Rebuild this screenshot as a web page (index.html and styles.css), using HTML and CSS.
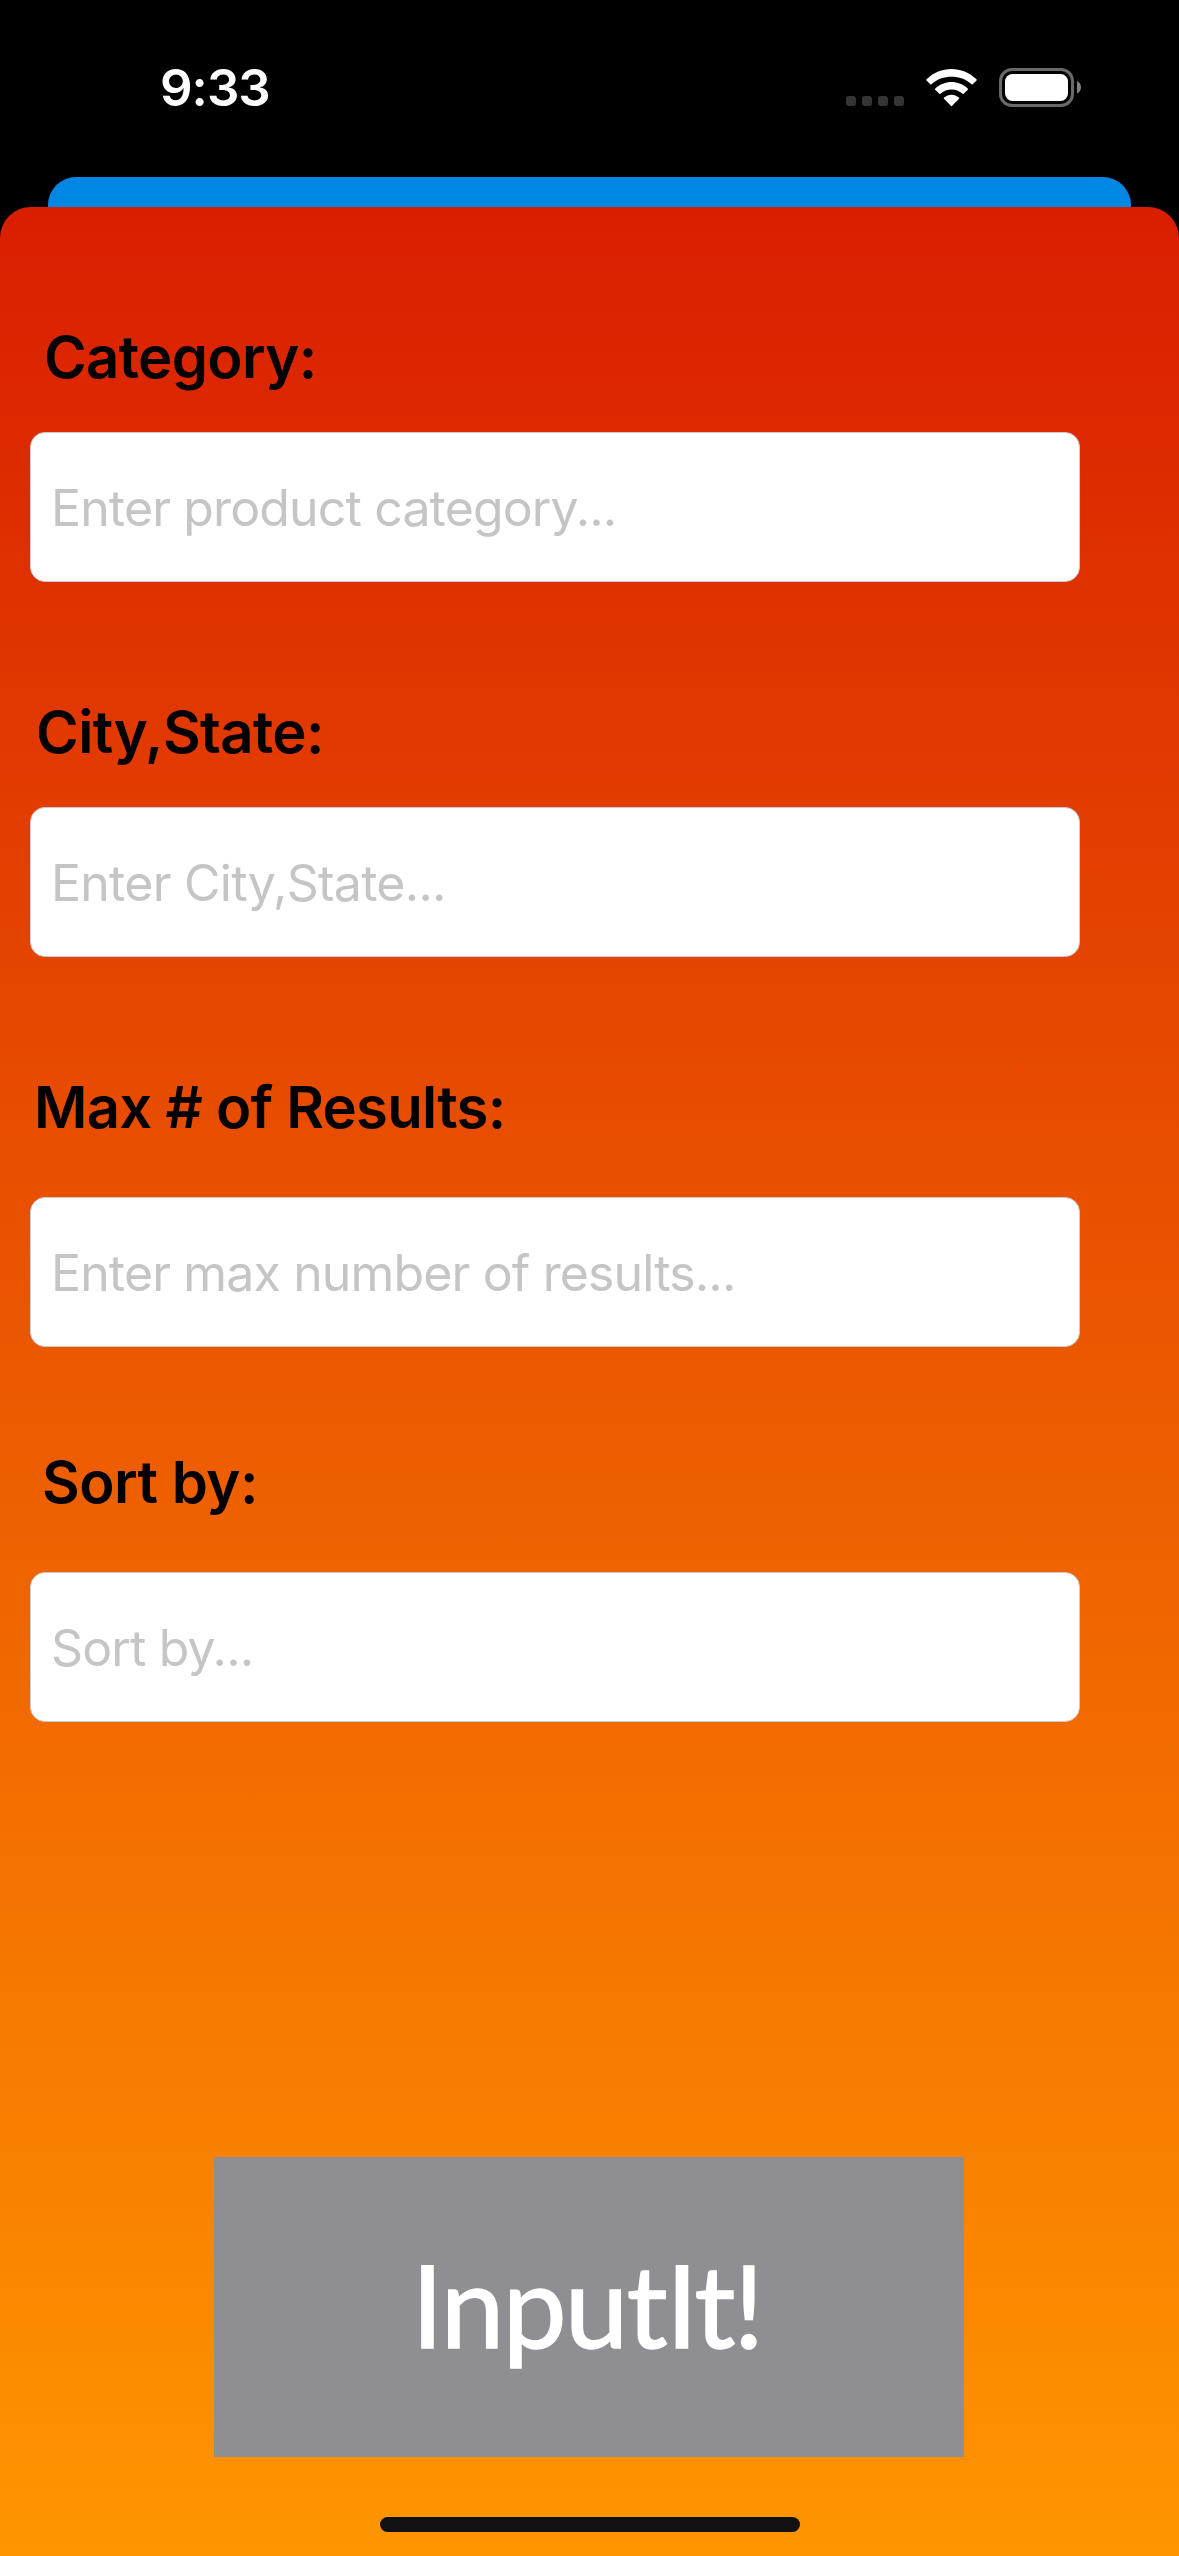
FILE: index.html
```html
<!DOCTYPE html>
<html lang="en">
<head>
<meta charset="utf-8">
<title>InputIt!</title>
<link rel="stylesheet" href="styles.css">
</head>
<body>
<div class="screen">
  <header class="status">
    <span class="time">9:33</span>
    <div class="indicators">
      <svg class="cellular" width="58" height="10" viewBox="0 0 58 10" fill="#343434">
        <rect width="10" height="10" rx="3"/><rect x="16" width="10" height="10" rx="3"/><rect x="32" width="10" height="10" rx="3"/><rect x="48" width="10" height="10" rx="3"/>
      </svg>
      <svg class="wifi" width="51" height="38" viewBox="0 0 51 38" fill="#fff">
        <path d="M.5 11.6Q-.1 11 .6 10.3C7.600 3.500 16.500 0 25.500 0S43.400 3.500 50.400 10.300Q51.100 11 50.500 11.600L46.700 15.300Q46.200 15.800 45.600 15.200C40 10 32.900 7.700 25.500 7.700S11 10 5.400 15.200Q4.800 15.800 4.300 15.300Z"/>
        <path d="M9.200 20.700Q8.600 20.100 9.300 19.400C13.800 15.200 19.600 12.900 25.500 12.900S37.200 15.200 41.700 19.400Q42.400 20.100 41.800 20.700L37.700 24.800Q37.200 25.300 36.600 24.800C33.500 22 29.600 20.500 25.500 20.500S17.500 22 14.400 24.800Q13.800 25.300 13.300 24.800Z"/>
        <path d="M18 29.800Q17.500 29.200 18.100 28.600C20.200 26.800 22.800 25.700 25.500 25.700S30.800 26.800 32.900 28.600Q33.500 29.200 33 29.800L26.200 36.800Q25.500 37.500 24.800 36.800Z"/>
      </svg>
      <svg class="battery" width="82" height="39" viewBox="0 0 82 39">
        <rect x="1.500" y="1.500" width="72" height="36" rx="11.500" fill="none" stroke="#696969" stroke-width="3"/>
        <rect x="6" y="6" width="63" height="27" rx="7.500" fill="#fff"/>
        <path d="M78 13C80.500 14 82 16.500 82 19.300S80.500 24.600 78 25.600Z" fill="#808080"/>
      </svg>
    </div>
  </header>
  <div class="behind"></div>
  <main class="sheet">
    <form class="fields">
      <div class="field near">
        <div class="label category">Category:</div>
        <div class="box"><span class="hint">Enter product category...</span></div>
      </div>
      <div class="field near">
        <div class="label city">City,State:</div>
        <div class="box"><span class="hint place">Enter City,State...</span></div>
      </div>
      <div class="field">
        <div class="label max">Max # of Results:</div>
        <div class="box"><span class="hint">Enter max number of results...</span></div>
      </div>
      <div class="field">
        <div class="label sort">Sort by:</div>
        <div class="box"><span class="hint">Sort by...</span></div>
      </div>
    </form>
    <button class="submit" type="button">InputIt!</button>
    <div class="home"></div>
  </main>
</div>
</body>
</html>
```
FILE: styles.css
```css
* { box-sizing: border-box; }
body { margin: 0; background: #000; font-family: Inter, "Liberation Sans", sans-serif; }
.screen { width: 1179px; height: 2556px; display: flex; flex-direction: column; overflow: hidden; background: #000; }
.status { height: 177px; padding: 58px 98px 0 160px; display: flex; justify-content: space-between; align-items: flex-start; }
.time { font-size: 51px; line-height: 60px; font-weight: 600; letter-spacing: -1px; color: #fff; white-space: nowrap; }
.indicators { display: flex; align-items: flex-start; padding-top: 10px; }
.cellular { margin-top: 28px; margin-right: 22px; }
.wifi { margin-top: 1px; margin-right: 22px; }
.behind { height: 30px; margin: 0 48px; background: #0086e3; border-radius: 28px 28px 0 0; }
.sheet { flex: 1; display: flex; flex-direction: column; align-items: center; padding-top: 114px; border-radius: 31px 31px 0 0; background: linear-gradient(#d91e00, #ff9500); }
.fields { width: 100%; display: grid; grid-auto-rows: 375px; }
.field { padding-left: 30px; display: flex; flex-direction: column; gap: 54px; }
.near { gap: 39px; }
.label { height: 72px; font-size: 58px; line-height: 72px; font-weight: 600; color: #000; white-space: nowrap; }
.category { padding-left: 14px; letter-spacing: -0.65px; }
.city { padding-left: 6px; letter-spacing: -0.6px; }
.max { padding-left: 4px; letter-spacing: -0.74px; }
.sort { padding-left: 12px; letter-spacing: -0.5px; }
.box { width: 1050px; height: 150px; padding: 2px 0 0 20px; display: flex; align-items: center; border: 1px solid #c9cacc; border-radius: 15px; background: #fff; }
.hint { font-size: 50px; line-height: 60px; color: #c5c5c7; letter-spacing: -0.86px; white-space: nowrap; }
.place { letter-spacing: -0.74px; }
.submit { width: 750px; height: 300px; margin: 336px 1px 0 0; padding: 0 4px 6px 0; border: 0; background: #8e8e93; color: #fff; font: 400 114px/140px Lato, sans-serif; letter-spacing: -1.7px; -webkit-text-stroke: 1.5px #fff; }
.home { width: 420px; height: 15px; margin-top: 60px; border-radius: 8px; background: #121212; }
```
